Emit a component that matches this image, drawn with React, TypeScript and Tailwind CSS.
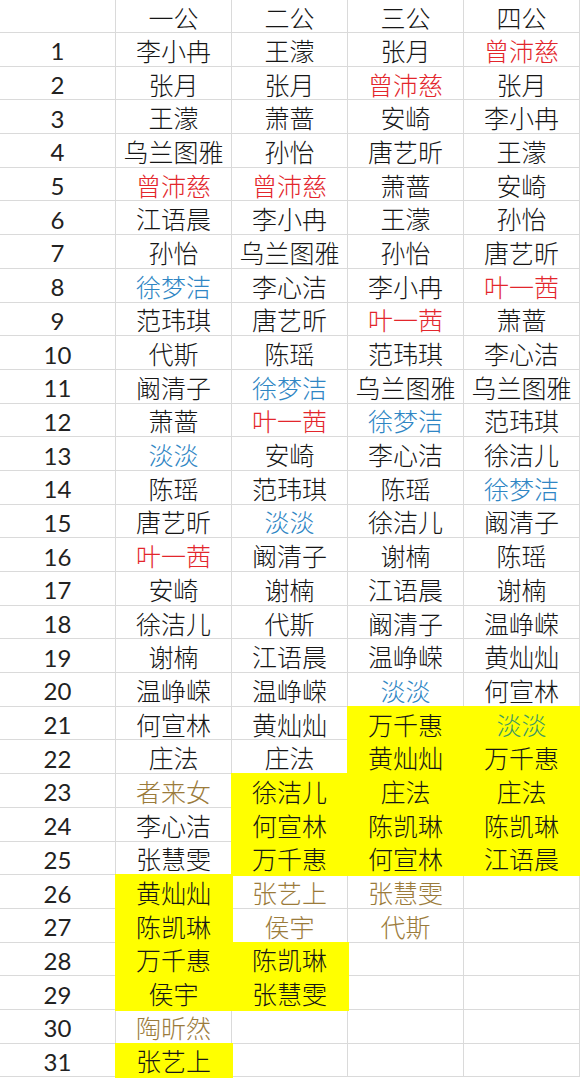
import React from "react";

type Cell = { t: string; c?: "r" | "b" | "g" | "o"; y?: boolean };

const R = (t: string): Cell => ({ t, c: "r" });
const B = (t: string): Cell => ({ t, c: "b" });
const O = (t: string): Cell => ({ t, c: "o" });
const Y = (t: string, c?: Cell["c"]): Cell => ({ t, c, y: true });
const N = (t: string): Cell => ({ t });
const E: Cell = { t: "" };

const rows: Cell[][] = [
  [N("李小冉"), N("王濛"), N("张月"), R("曾沛慈")],
  [N("张月"), N("张月"), R("曾沛慈"), N("张月")],
  [N("王濛"), N("萧蔷"), N("安崎"), N("李小冉")],
  [N("乌兰图雅"), N("孙怡"), N("唐艺昕"), N("王濛")],
  [R("曾沛慈"), R("曾沛慈"), N("萧蔷"), N("安崎")],
  [N("江语晨"), N("李小冉"), N("王濛"), N("孙怡")],
  [N("孙怡"), N("乌兰图雅"), N("孙怡"), N("唐艺昕")],
  [B("徐梦洁"), N("李心洁"), N("李小冉"), R("叶一茜")],
  [N("范玮琪"), N("唐艺昕"), R("叶一茜"), N("萧蔷")],
  [N("代斯"), N("陈瑶"), N("范玮琪"), N("李心洁")],
  [N("阚清子"), B("徐梦洁"), N("乌兰图雅"), N("乌兰图雅")],
  [N("萧蔷"), R("叶一茜"), B("徐梦洁"), N("范玮琪")],
  [B("淡淡"), N("安崎"), N("李心洁"), N("徐洁儿")],
  [N("陈瑶"), N("范玮琪"), N("陈瑶"), B("徐梦洁")],
  [N("唐艺昕"), B("淡淡"), N("徐洁儿"), N("阚清子")],
  [R("叶一茜"), N("阚清子"), N("谢楠"), N("陈瑶")],
  [N("安崎"), N("谢楠"), N("江语晨"), N("谢楠")],
  [N("徐洁儿"), N("代斯"), N("阚清子"), N("温峥嵘")],
  [N("谢楠"), N("江语晨"), N("温峥嵘"), N("黄灿灿")],
  [N("温峥嵘"), N("温峥嵘"), B("淡淡"), N("何宣林")],
  [N("何宣林"), N("黄灿灿"), Y("万千惠"), Y("淡淡", "g")],
  [N("庄法"), N("庄法"), Y("黄灿灿"), Y("万千惠")],
  [O("者来女"), Y("徐洁儿"), Y("庄法"), Y("庄法")],
  [N("李心洁"), Y("何宣林"), Y("陈凯琳"), Y("陈凯琳")],
  [N("张慧雯"), Y("万千惠"), Y("何宣林"), Y("江语晨")],
  [Y("黄灿灿"), O("张艺上"), O("张慧雯"), E],
  [Y("陈凯琳"), O("侯宇"), O("代斯"), E],
  [Y("万千惠"), Y("陈凯琳"), E, E],
  [Y("侯宇"), Y("张慧雯"), E, E],
  [O("陶昕然"), E, E, E],
  [Y("张艺上"), E, E, E],
];

const colorClass = (c?: Cell["c"]) => {
  if (c === "r") return "text-[#e3262c]";
  if (c === "b") return "text-[#2f86c4]";
  if (c === "g") return "text-[#3f9a62]";
  if (c === "o") return "text-[#9b7b3b]";
  return "text-[#161616]";
};

const base = "flex items-center justify-center border-r border-b border-[#dadada] pt-[4px] leading-none";

export default function App() {
  return (
    <div
      className="w-[580px] h-[1080px] overflow-hidden bg-white font-light"
      style={{ fontFamily: 'Lato, "Noto Sans CJK SC", sans-serif' }}
    >
      <div className="grid grid-cols-[repeat(5,116px)] grid-rows-[33px] auto-rows-[33.7px] text-[25px]">
        <div className={`${base} pt-0`} />
        {["一公", "二公", "三公", "四公"].map((h) => (
          <div key={h} className={`${base} pt-0 text-[#161616]`}>
            {h}
          </div>
        ))}
        {rows.map((row, i) => (
          <React.Fragment key={i}>
            <div className={`${base} text-[24px] font-normal text-[#222]`}>{i + 1}</div>
            {row.map((cell, j) => (
              <div
                key={j}
                className={
                  cell.y
                    ? `${base} relative z-10 bg-[#ffff00] border-[#ffff00] shadow-[0_0_0_1px_#ffff00] ${colorClass(cell.c)}`
                    : `${base} ${colorClass(cell.c)}`
                }
              >
                {cell.t}
              </div>
            ))}
          </React.Fragment>
        ))}
      </div>
    </div>
  );
}
